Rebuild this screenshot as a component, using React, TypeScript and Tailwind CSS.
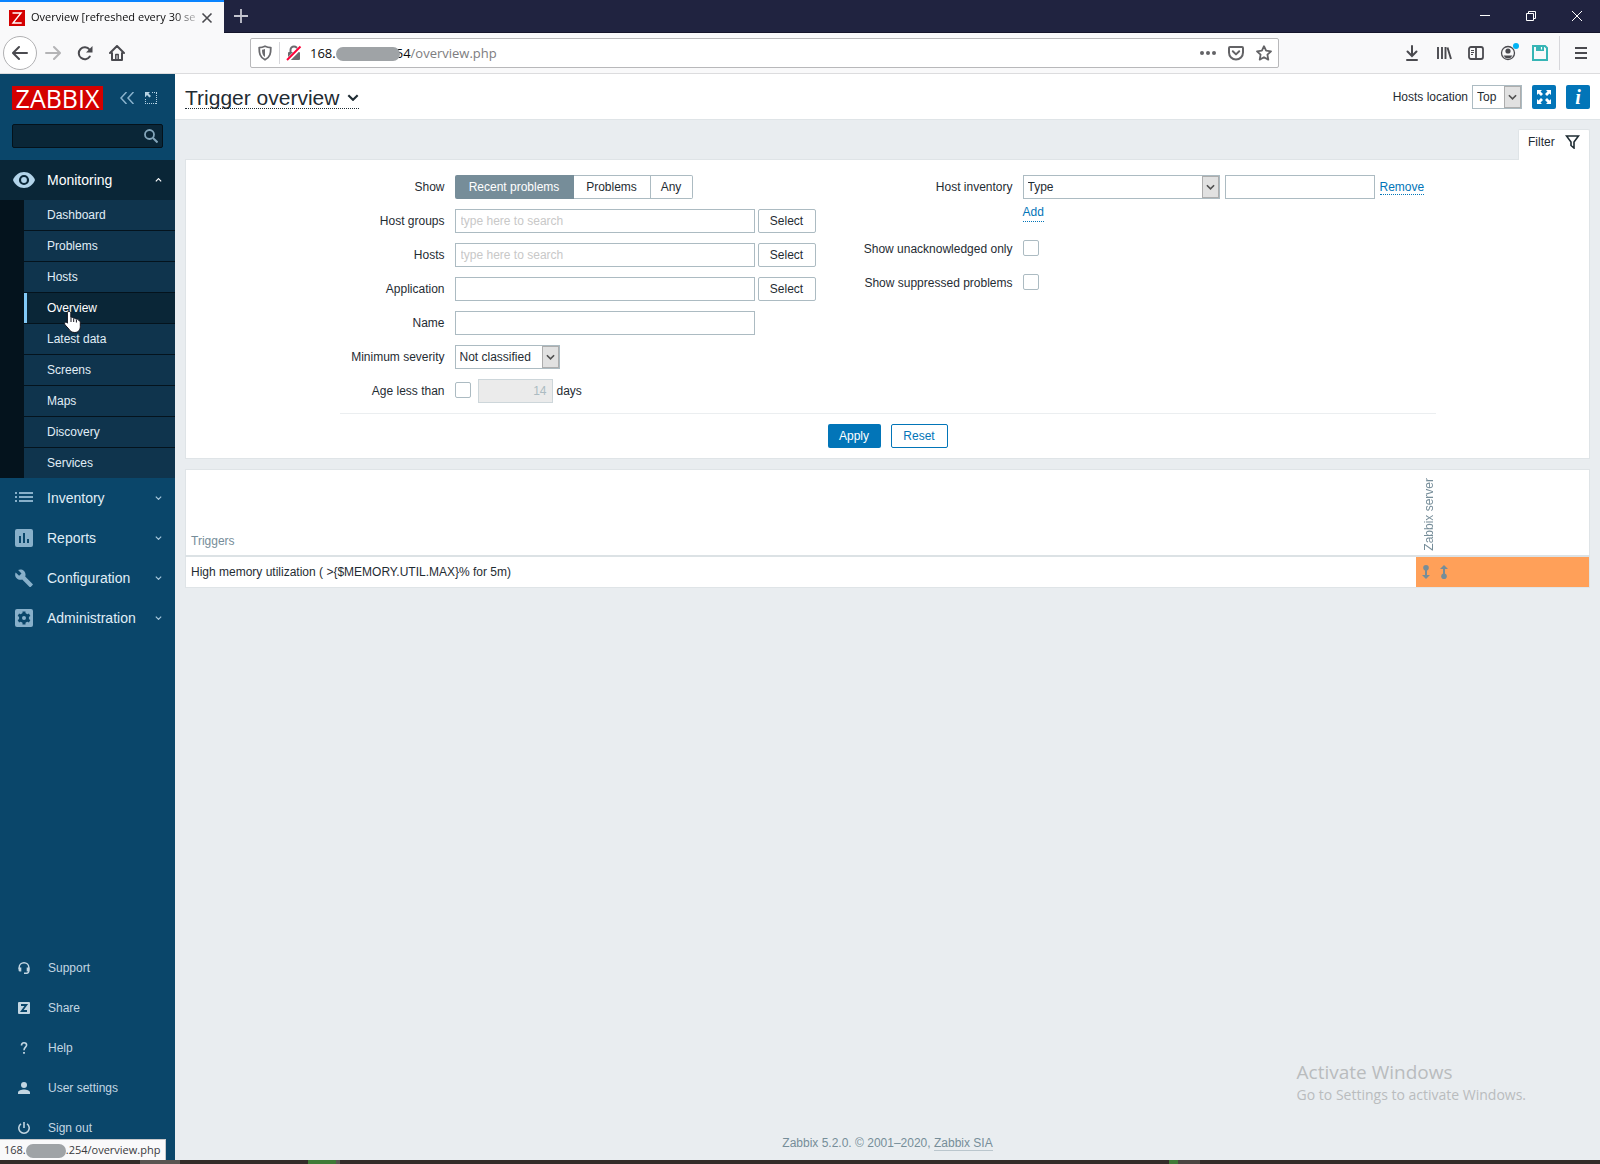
import React from "react";

const fieldBorder = "border border-[#acbbc2]";

function Chevron({ className }: { className?: string }) {
  return (
    <svg viewBox="0 0 10 6" className={className} fill="none" stroke="currentColor" strokeWidth="1.8">
      <path d="M1 1l4 4 4-4" />
    </svg>
  );
}

function Select({ id, value, width, label }: { id: string; value: string; width: string; label?: string }) {
  return (
    <div className={`relative h-6 shrink-0 ${width}`}>
      <select
        id={id}
        aria-label={label}
        defaultValue={value}
        className={`block h-6 w-full appearance-none bg-white pr-4 pl-1 text-[#1f2c33] ${fieldBorder}`}
      >
        <option>{value}</option>
      </select>
      <span className="pointer-events-none absolute top-px right-px flex h-[22px] w-[17px] items-center justify-center border border-[#adadad] bg-[#e1e1e1] text-[#505050]">
        <Chevron className="h-[6px] w-[9px]" />
      </span>
    </div>
  );
}

function Check({ id }: { id: string }) {
  return <input id={id} type="checkbox" className={`mb-[2px] block size-4 appearance-none rounded-[2px] bg-white ${fieldBorder}`} />;
}

function Row({ label, id, children }: { label: string; id?: string; children: React.ReactNode }) {
  return (
    <>
      <label htmlFor={id} className="flex h-6 items-center justify-end whitespace-nowrap">
        {label}
      </label>
      <div className="flex min-h-6 items-center">{children}</div>
    </>
  );
}

function TextWithSelect({ id, placeholder }: { id: string; placeholder?: string }) {
  return (
    <>
      <input id={id} placeholder={placeholder} className={`h-6 w-[300px] bg-white px-[5px] placeholder:text-[#c8c8c8] ${fieldBorder}`} />
      <button type="button" className={`ml-[3px] h-6 w-[58px] rounded-[2px] bg-white ${fieldBorder}`}>
        Select
      </button>
    </>
  );
}

function BrowserChrome() {
  return (
    <header className="font-['Open_Sans','Noto_Sans',sans-serif]">
      <div className="flex h-[33px] items-stretch border-b border-[#14152b] bg-[#202340] text-white">
        <div className="-mb-px flex w-56 items-center border-t-2 border-[#0a84ff] bg-[#f9f9fa] pl-[9px] text-[#0c0c0d]">
          <svg viewBox="0 0 16 16" className="size-4 shrink-0">
            <path fill="#d40000" d="M0 0h16v16H0z" />
            <path fill="none" stroke="#fff" strokeWidth="1.4" d="M3.5 3h8.500L4 13h8.700" />
          </svg>
          <span className="ml-[6px] w-[166px] text-[11px] whitespace-nowrap [mask-image:linear-gradient(to_right,#000_86%,#0003)]">
            Overview [refreshed every 30 se
          </span>
          <button type="button" aria-label="Close tab" className="ml-1">
            <svg viewBox="0 0 12 12" className="size-3" stroke="#4a4a4f" strokeWidth="1.6">
              <path d="M1.500 1.500l9 9M10.500 1.500l-9 9" />
            </svg>
          </button>
        </div>
        <button type="button" aria-label="New tab" className="ml-[9px] flex items-center">
          <svg viewBox="0 0 16 16" className="size-4" stroke="#c4c5cf" strokeWidth="1.8">
            <path d="M8 1v14M1 8h14" />
          </svg>
        </button>
        <div className="ml-auto flex items-center gap-9 pr-[18px]">
          <button type="button" aria-label="Minimize">
            <svg viewBox="0 0 10 10" className="size-[10px]" stroke="#fff">
              <path d="M0 4.500h10" />
            </svg>
          </button>
          <button type="button" aria-label="Restore">
            <svg viewBox="0 0 10 10" className="size-[10px]" stroke="#fff" fill="none">
              <path d="M.5 2.500h7v7h-7zM2.500 2.500v-2h7v7h-2" />
            </svg>
          </button>
          <button type="button" aria-label="Close">
            <svg viewBox="0 0 10 10" className="size-[10px]" stroke="#fff">
              <path d="M0 0l10 10M10 0L0 10" />
            </svg>
          </button>
        </div>
      </div>

      <div className="flex h-[41px] items-center border-b border-[#dcdcde] bg-[#f9f9fa] text-[#4a4a4f]">
        <button type="button" aria-label="Back" className="ml-[3px] flex size-[34px] items-center justify-center rounded-full border border-[#b1b1b3] bg-white">
          <svg viewBox="0 0 16 16" className="size-4" fill="none" stroke="currentColor" strokeWidth="2" strokeLinecap="round" strokeLinejoin="round">
            <path d="M15 8H1.500M7 2L1 8l6 6" />
          </svg>
        </button>
        <button type="button" aria-label="Forward" className="ml-2">
          <svg viewBox="0 0 16 16" className="size-4" fill="none" stroke="#b4b4b6" strokeWidth="2" strokeLinecap="round" strokeLinejoin="round">
            <path d="M1 8h13.500M9 2l6 6-6 6" />
          </svg>
        </button>
        <button type="button" aria-label="Reload" className="ml-4">
          <svg viewBox="0 0 16 16" className="size-4" fill="none" stroke="currentColor" strokeWidth="2">
            <path strokeLinecap="round" d="M12.800 11.500A6 6 0 1 1 12.500 4.500" />
            <path fill="currentColor" stroke="none" d="M15.500 1v6.500H9z" />
          </svg>
        </button>
        <button type="button" aria-label="Home" className="ml-4">
          <svg viewBox="0 0 16 16" className="size-4" fill="none" stroke="currentColor" strokeWidth="2" strokeLinejoin="round" strokeLinecap="round">
            <path d="M1 8l7-7 7 7M3 8v7h10V8" />
            <path strokeWidth="1.500" d="M6.800 14V9.500h2.400V14" />
          </svg>
        </button>

        <div className="ml-[125px] flex h-[30px] w-[1029px] min-w-0 items-center rounded-[2px] border border-[#b8b8ba] bg-white pl-[6px]">
          <svg viewBox="0 0 16 16" className="size-4 shrink-0" fill="none" stroke="#6a6a6e" strokeWidth="1.800">
            <path strokeLinejoin="round" d="M8 1.200C6 2.200 4 2.600 2.200 2.600c0 5.400.5 9.700 5.800 12.200 5.300-2.500 5.800-6.800 5.800-12.200C12 2.600 10 2.200 8 1.200z" />
            <path fill="#6a6a6e" stroke="none" d="M8 4v8c-2.500-1.600-3-4-3-7.300C6 4.700 7 4.400 8 4z" />
          </svg>
          <span className="mx-[6px] h-[22px] w-px bg-[#d7d7db]" />
          <svg viewBox="0 0 16 16" className="size-4 shrink-0" fill="none">
            <rect x="2" y="7" width="12" height="8" rx="1" fill="#6a6a6e" />
            <path stroke="#6a6a6e" strokeWidth="2" d="M4.500 7.500V5a3.500 3.500 0 0 1 7 0v2.500" />
            <path stroke="#fff" strokeWidth="4" d="M1.500 15.500L15.500 1.500" />
            <path stroke="#ff0039" strokeWidth="2" d="M1 15L14.500 1.500" />
          </svg>
          <div className="ml-2 flex flex-1 items-center pt-[2px] text-[13px] text-[#0c0c0d]">
            168.
            <span className="relative -mr-[4px] h-[14px] w-16 rounded-full bg-[#9fa3a6]" />
            54<span className="text-[#7d7d80]">/overview.php</span>
          </div>
          <div className="flex items-center gap-3 pr-[6px] text-[#636366]">
            <svg viewBox="0 0 16 16" className="size-4" fill="currentColor">
              <circle cx="2" cy="8" r="2" />
              <circle cx="8" cy="8" r="2" />
              <circle cx="14" cy="8" r="2" />
            </svg>
            <svg viewBox="0 0 16 16" className="size-4" fill="none" stroke="currentColor" strokeWidth="2" strokeLinecap="round" strokeLinejoin="round">
              <path d="M2 2h12a1 1 0 0 1 1 1v4.500a7 7 0 0 1-14 0V3a1 1 0 0 1 1-1z" />
              <path d="M4.800 6.300L8 9.400l3.200-3.100" />
            </svg>
            <svg viewBox="0 0 16 16" className="size-4" fill="none" stroke="currentColor" strokeWidth="1.800" strokeLinejoin="round">
              <path d="M8 1.200l2.100 4.500 4.900.6-3.600 3.400.9 4.900L8 12.200l-4.300 2.400.9-4.900L1 6.300l4.900-.6z" />
            </svg>
          </div>
        </div>

        <div className="ml-auto flex items-center gap-4 pr-[13px]">
          <svg viewBox="0 0 16 16" className="size-4" fill="none" stroke="currentColor" strokeWidth="2" strokeLinecap="round">
            <path d="M8 1v9.500M3.500 6.500L8 11l4.500-4.500M3 15h10" />
          </svg>
          <svg viewBox="0 0 16 16" className="size-4" fill="none" stroke="currentColor" strokeWidth="1.900">
            <path d="M2 2v12M6 2v12M9.500 2v12M11.500 2.500L15 14" />
          </svg>
          <svg viewBox="0 0 16 16" className="size-4" fill="none" stroke="currentColor" strokeWidth="1.800">
            <rect x="1" y="2" width="14" height="12" rx="2" />
            <path d="M8 2v12" />
            <path strokeWidth="1" d="M3 5.500h3M3 7.500h3M3 9.500h2" />
          </svg>
          <svg viewBox="0 0 18 18" className="size-[18px] overflow-visible" fill="none">
            <circle cx="8" cy="9" r="6.500" stroke="currentColor" strokeWidth="1.300" />
            <circle cx="8" cy="7" r="2.600" fill="currentColor" />
            <path fill="currentColor" d="M3.500 11.500h9a5 5 0 0 1-9 0z" />
            <circle cx="16" cy="2" r="3" fill="#00b3f4" />
          </svg>
          <svg viewBox="0 0 16 16" className="-ml-[2px] size-4" fill="none" stroke="#37b5b5" strokeWidth="2">
            <path d="M1 1h12l2 2v12H1z" />
            <path fill="#37b5b5" stroke="none" d="M4 1h8v5H4z" />
            <path stroke="#fff" strokeWidth="1.200" d="M9.500 2v2.500" />
          </svg>
          <span className="-mr-px -ml-[5px] h-[34px] w-px bg-[#d7d7db]" />
          <svg viewBox="0 0 12 12" className="size-3" stroke="currentColor" strokeWidth="2">
            <path d="M0 1h12M0 6h12M0 11h12" />
          </svg>
        </div>
      </div>
    </header>
  );
}

const submenu = ["Dashboard", "Problems", "Hosts", "Overview", "Latest data", "Screens", "Maps", "Discovery", "Services"];

const sections = [
  {
    label: "Inventory",
    icon: <path d="M0 1h2v2H0zM4 1h14v2H4zM0 5h2v2H0zM4 5h14v2H4zM0 9h2v2H0zM4 9h14v2H4z" transform="translate(0 2)" />,
  },
  {
    label: "Reports",
    icon: <path fillRule="evenodd" d="M2 0h14a2 2 0 0 1 2 2v14a2 2 0 0 1-2 2H2a2 2 0 0 1-2-2V2a2 2 0 0 1 2-2zM4 7v7h2V7zM8 4v10h2V4zM12 10v4h2v-4z" />,
  },
  {
    label: "Configuration",
    icon: <path d="M17.600 14.900L10.200 7.500c.7-1.900.3-4-1.200-5.500C7.400.4 5 .1 3.100 1l3.400 3.400-2.400 2.400L.7 3.400c-1 1.900-.6 4.300 1 5.900 1.500 1.500 3.600 1.900 5.500 1.200l7.400 7.400c.3.300.8.300 1.100 0l1.900-1.900c.4-.3.400-.8 0-1.100z" />,
  },
  {
    label: "Administration",
    icon: (
      <>
        <rect width="18" height="18" rx="2" />
        <g fill="#0a466a">
          <circle cx="9" cy="9" r="5" />
          <path d="M7.500 2.500h3v13h-3z" />
          <path d="M7.500 2.500h3v13h-3z" transform="rotate(60 9 9)" />
          <path d="M7.500 2.500h3v13h-3z" transform="rotate(120 9 9)" />
        </g>
        <circle cx="9" cy="9" r="2" />
      </>
    ),
  },
];

const userLinks = [
  {
    label: "Support",
    icon: (
      <>
        <path fill="none" stroke="currentColor" strokeWidth="1.400" d="M1.200 7V5.200a4.800 4.500 0 0 1 9.600 0V9a2 2 0 0 1-2 2.200H6" />
        <path d="M.5 5.500h2.800v4H2A1.500 1.500 0 0 1 .5 8zM8.700 5.500h2.800V8A1.500 1.500 0 0 1 10 9.500H8.700z" />
      </>
    ),
  },
  {
    label: "Share",
    icon: (
      <>
        <rect width="12" height="12" rx="1" />
        <path fill="none" stroke="#0a466a" strokeWidth="1.800" d="M3 3h5.300L3.800 9H9" />
      </>
    ),
  },
  {
    label: "Help",
    icon: (
      <>
        <path fill="none" stroke="currentColor" strokeWidth="1.600" d="M3.500 3.500C3.500 1.700 4.500.8 6 .8s2.600.9 2.600 2.300C8.600 5.200 6 5.300 6 8.300" />
        <path d="M5.100 10h1.800v1.800H5.100z" />
      </>
    ),
  },
  {
    label: "User settings",
    icon: (
      <>
        <circle cx="6" cy="3" r="3" />
        <path d="M0 12v-1.500C0 8.500 3.500 7.500 6 7.500s6 1 6 3V12z" />
      </>
    ),
  },
  {
    label: "Sign out",
    icon: (
      <>
        <path fill="none" stroke="currentColor" strokeWidth="1.500" d="M3 1.800a5.200 5.200 0 1 0 6 0" />
        <path d="M5.200 0h1.600v6H5.200z" />
      </>
    ),
  },
];

function Sidebar() {
  return (
    <aside className="relative flex w-[175px] shrink-0 flex-col bg-[#0a466a] text-[#e0eef7]">
      <div className="flex items-center pt-3 pl-3">
        <a
          href="#"
          aria-label="Zabbix"
          className="flex h-6 w-[91px] items-center justify-center bg-[#d40000] font-['Open_Sans',sans-serif] text-[25px] leading-6 text-white"
        >
          ZABBIX
        </a>
        <button type="button" aria-label="Collapse sidebar" className="ml-[17px] text-[#8ab3cd]">
          <svg viewBox="0 0 14 12" className="h-3 w-[14px]" fill="none" stroke="currentColor" strokeWidth="1.500">
            <path d="M6.500 0L1 6l5.500 6M13.500 0L8 6l5.500 6" />
          </svg>
        </button>
        <button type="button" aria-label="Hide sidebar" className="ml-[11px] text-[#b7d3e4]">
          <svg viewBox="0 0 12 12" className="size-3" fill="none" stroke="currentColor">
            <path strokeDasharray="1 1" d="M7 .5h5M11.500 1v11M.5 7v5M0 11.500h12" />
            <path fill="currentColor" stroke="none" d="M0 0h5L3.500 1.500 6 4 4.500 5.500 2 3 .5 5H0z" />
          </svg>
        </button>
      </div>
      <form className="relative mx-3 mt-[14px] mb-3" onSubmit={(e) => e.preventDefault()}>
        <input
          aria-label="Search"
          className="block h-6 w-full rounded-[2px] border border-[#04121b] bg-[#0a2637] px-2 text-xs"
        />
        <svg viewBox="0 0 14 14" className="absolute top-[5px] right-[5px] size-[14px] text-[#84a6bb]" fill="none" stroke="currentColor">
          <circle cx="5.500" cy="5.500" r="4.500" strokeWidth="1.800" />
          <path strokeWidth="2" d="M9 9l4.500 4.500" />
        </svg>
      </form>

      <nav>
        <button type="button" className="flex h-10 w-full items-center bg-[#0a2637] pr-[13px] pl-[13px] text-sm text-white">
          <svg viewBox="0 0 22 16" className="h-4 w-[22px]" fill="none">
            <path fill="#b3d4ea" d="M11 0C6 0 1.800 3.300 0 8c1.800 4.700 6 8 11 8s9.200-3.300 11-8C20.200 3.300 16 0 11 0z" />
            <circle cx="11" cy="8" r="4" stroke="#0a2637" strokeWidth="2.200" />
          </svg>
          <span className="ml-3">Monitoring</span>
          <Chevron className="ml-auto h-1 w-[7px] rotate-180" />
        </button>
        <ul className="bg-[#04131d] pl-6 text-xs text-[#e0eef7]">
          {submenu.map((item) => (
            <li key={item} className="border-b border-[#04131d] last:border-b-0">
              <a
                href="#"
                className={
                  item === "Overview"
                    ? "flex h-[30px] items-center border-l-3 border-[#81c9f7] bg-[#0a2637] pl-5 text-white"
                    : "flex h-[30px] items-center bg-[#0f344d] pl-[23px]"
                }
              >
                {item}
              </a>
            </li>
          ))}
        </ul>
        {sections.map((s) => (
          <button key={s.label} type="button" className="flex h-10 w-full items-center pr-[13px] pl-[15px] text-sm">
            <svg viewBox="0 0 18 18" className="size-[18px] text-[#88b0ca]" fill="currentColor">
              {s.icon}
            </svg>
            <span className="ml-[14px]">{s.label}</span>
            <Chevron className="ml-auto h-1 w-[7px] text-[#a9c8dc]" />
          </button>
        ))}
      </nav>

      <nav className="mt-auto mb-3 text-xs text-[#c3d6e2]">
        {userLinks.map((u) => (
          <a key={u.label} href="#" className="flex h-10 items-center pl-[18px]">
            <svg viewBox="0 0 12 12" className="size-3" fill="currentColor">
              {u.icon}
            </svg>
            <span className="ml-[18px]">{u.label}</span>
          </a>
        ))}
      </nav>

      <svg viewBox="0 0 17 23" className="pointer-events-none absolute top-[236px] left-16 h-[23px] w-[17px]">
        <path
          fill="#fff"
          stroke="#14141e"
          strokeLinejoin="round"
          d="M5 1.500c1 0 1.800.6 1.800 1.600v4.400c1-.5 2.300 0 2.600.8 1-.4 2.200 0 2.500.9 1.200-.3 2.400.2 2.900 1.300 1 .2 1.500 1 1.500 2v4c0 3.500-2 6-5.500 6-3 0-4.700-1.300-6-3.500L1 14.800c-.7-1.300-.5-2.300.4-2.600 1-.2 1.600.4 2 1V3.100c0-1 .6-1.600 1.600-1.600z"
        />
        <path stroke="#14141e" d="M7 8v4M9.700 9v3M12.400 10v2.500" />
      </svg>

      <div className="absolute bottom-0 left-0 flex h-[21px] w-[166px] items-center border-t border-r border-[#c8c8ca] bg-[#f9f9fa] pt-px pl-1 font-['Open_Sans','Noto_Sans',sans-serif] text-[11px] text-[#3a3a3d]">
        168.
        <span className="h-[14px] w-10 rounded-full bg-[#9fa3a6]" />
        .254/overview.php
      </div>
    </aside>
  );
}

function FilterPanel() {
  return (
    <section>
      <div className="relative z-10 -mb-px flex justify-end">
        <button type="button" className="flex h-[31px] w-[72px] items-center justify-between rounded-t-[2px] border border-b-0 border-[#dfe4e7] bg-white pr-[9px] pb-[7px] pl-[9px]">
          Filter
          <svg viewBox="0 0 15 14" className="h-[14px] w-[15px]" fill="none" stroke="#1f2c33" strokeWidth="1.600">
            <path d="M1.500 1h12L9 7v6L6 10.500V7z" />
          </svg>
        </button>
      </div>
      <form className="border border-[#dfe4e7] bg-white pt-[15px] pb-[10px]" onSubmit={(e) => e.preventDefault()}>
        <div className="mx-auto max-w-[1096px]">
          <div className="grid grid-cols-[503px_1fr] pb-[10px]">
            <div className="grid grid-cols-[105px_1fr] content-start gap-x-[10px] gap-y-[10px]">
              <Row label="Show">
                <div className="flex h-6">
                  <button type="button" className="w-[119px] rounded-l-[2px] bg-[#768d99] text-white">
                    Recent problems
                  </button>
                  <button type="button" className="w-[77px] border-y border-r border-[#acbbc2] bg-white">
                    Problems
                  </button>
                  <button type="button" className="w-[42px] rounded-r-[2px] border-y border-r border-[#acbbc2] bg-white">
                    Any
                  </button>
                </div>
              </Row>
              <Row label="Host groups" id="groups">
                <TextWithSelect id="groups" placeholder="type here to search" />
              </Row>
              <Row label="Hosts" id="hosts">
                <TextWithSelect id="hosts" placeholder="type here to search" />
              </Row>
              <Row label="Application" id="application">
                <TextWithSelect id="application" />
              </Row>
              <Row label="Name" id="name">
                <input id="name" className={`h-6 w-[300px] bg-white px-[5px] ${fieldBorder}`} />
              </Row>
              <Row label="Minimum severity" id="severity">
                <Select id="severity" value="Not classified" width="w-[105px]" />
              </Row>
              <Row label="Age less than" id="age">
                <Check id="age" />
                <input
                  aria-label="Age in days"
                  disabled
                  defaultValue="14"
                  className="mr-1 ml-[7px] h-6 w-[75px] border border-[#cdd6da] bg-[#ebebeb] px-[5px] text-right text-[#acbbc2]"
                />
                days
              </Row>
            </div>
            <div className="grid grid-cols-[170px_1fr] content-start gap-x-[10px] gap-y-[10px]">
              <Row label="Host inventory" id="inventory">
                <Select id="inventory" value="Type" width="w-[197px]" />
                <input aria-label="Inventory value" className={`mx-[5px] h-6 w-[150px] bg-white px-[5px] ${fieldBorder}`} />
                <a href="#" className="border-b border-dotted border-[#0275b8] leading-[14px] text-[#0275b8]">
                  Remove
                </a>
              </Row>
              <div className="col-start-2 -mt-[6px] flex h-6 items-start">
                <a href="#" className="border-b border-dotted border-[#0275b8] leading-[18px] text-[#0275b8]">
                  Add
                </a>
              </div>
              <Row label="Show unacknowledged only" id="unack">
                <Check id="unack" />
              </Row>
              <Row label="Show suppressed problems" id="suppressed">
                <Check id="suppressed" />
              </Row>
            </div>
          </div>
          <div className="flex justify-center gap-[10px] border-t border-[#ebeef0] pt-[10px]">
            <button type="submit" className="h-6 w-[53px] rounded-[2px] bg-[#0275b8] text-white">
              Apply
            </button>
            <button type="reset" className="h-6 w-[57px] rounded-[2px] border border-[#0275b8] bg-white text-[#0275b8]">
              Reset
            </button>
          </div>
        </div>
      </form>
    </section>
  );
}

function TriggerTable() {
  return (
    <table className="mt-[10px] w-full border-collapse border border-[#dfe4e7] bg-white text-left">
      <thead>
        <tr className="h-[86px] border-b-2 border-[#dce2e5] text-[#768d99]">
          <th className="px-[5px] pb-[6px] align-bottom font-normal">Triggers</th>
          <th className="w-[174px] px-[5px] pb-0 align-bottom font-normal">
            <span className="inline-block rotate-180 [writing-mode:vertical-rl]">Zabbix server</span>
          </th>
        </tr>
      </thead>
      <tbody>
        <tr className="h-8">
          <td className="px-[5px]">{"High memory utilization ( >{$MEMORY.UTIL.MAX}% for 5m)"}</td>
          <td className="bg-[#ffa059] px-[6px]">
            <div className="flex gap-[10px] text-[#768d99]">
              <svg viewBox="0 0 8 14" className="h-[14px] w-2" fill="currentColor">
                <circle cx="4" cy="2.800" r="2.800" />
                <path d="M3 3h2v7h3l-4 4-4-4h3z" />
              </svg>
              <svg viewBox="0 0 8 14" className="h-[14px] w-2" fill="currentColor">
                <circle cx="4" cy="11.200" r="2.800" />
                <path d="M3 11h2V4h3L4 0 0 4h3z" />
              </svg>
            </div>
          </td>
        </tr>
      </tbody>
    </table>
  );
}

export default function App() {
  return (
    <div className="flex min-h-screen flex-col bg-[#e9edf0] font-['Liberation_Sans',Arial,sans-serif] text-xs text-[#1f2c33]">
      <BrowserChrome />
      <div className="flex flex-1">
        <Sidebar />
        <main className="relative flex min-w-0 flex-1 flex-col">
          <header className="flex h-[46px] items-center border-b border-[#dfe4e7] bg-white px-[10px]">
            <h1>
              <button type="button" className="flex items-center gap-2 border-b border-dotted border-[#1f2c33] pt-[3px] text-[21px] leading-[20px]">
                Trigger overview
                <Chevron className="h-[7px] w-3" />
              </button>
            </h1>
            <label htmlFor="location" className="mr-1 ml-auto">
              Hosts location
            </label>
            <Select id="location" value="Top" width="w-[50px]" />
            <button type="button" aria-label="Fullscreen" className="ml-[10px] flex size-6 items-center justify-center rounded-[2px] bg-[#0275b8] text-white">
              <svg viewBox="0 0 14 14" className="size-[14px]" fill="currentColor">
                <path d="M0 0h5L3.500 1.500 6 4 4 6 1.500 3.500 0 5z" />
                <path d="M14 0v5l-1.500-1.500L10 6 8 4l2.500-2.500L9 0z" />
                <path d="M0 14V9l1.500 1.500L4 8l2 2-2.500 2.500L5 14z" />
                <path d="M14 14H9l1.500-1.500L8 10l2-2 2.500 2.500L14 9z" />
              </svg>
            </button>
            <button
              type="button"
              aria-label="Help"
              className="ml-[10px] size-6 rounded-[2px] bg-[#0275b8] font-['Liberation_Serif',serif] text-xl leading-6 font-bold text-white italic"
            >
              i
            </button>
          </header>
          <div className="flex flex-1 flex-col px-[10px] pt-[9px]">
            <FilterPanel />
            <TriggerTable />
            <footer className="mt-auto pb-[9px] text-center text-[#768d99]">
              Zabbix 5.2.0. © 2001–2020,{" "}
              <a href="#" className="border-b border-[#bac6cd]">
                Zabbix SIA
              </a>
            </footer>
          </div>
          <div className="pointer-events-none absolute right-[74px] bottom-[54px] font-['Open_Sans','Noto_Sans',sans-serif] text-[#b9bcbe]">
            <p className="text-[19px] leading-6">Activate Windows</p>
            <p className="text-sm leading-[22px]">Go to Settings to activate Windows.</p>
          </div>
        </main>
      </div>
      <div className="flex h-1 bg-[#332c29]">
        <span className="ml-[140px] w-[40px] bg-[#5a5552]" />
        <span className="ml-[128px] w-[28px] bg-[#3f7a37]" />
        <span className="w-1 bg-[#5a5552]" />
        <span className="ml-[829px] w-[9px] bg-[#3f7a37]" />
        <span className="w-[22px] bg-[#4b4542]" />
      </div>
    </div>
  );
}
